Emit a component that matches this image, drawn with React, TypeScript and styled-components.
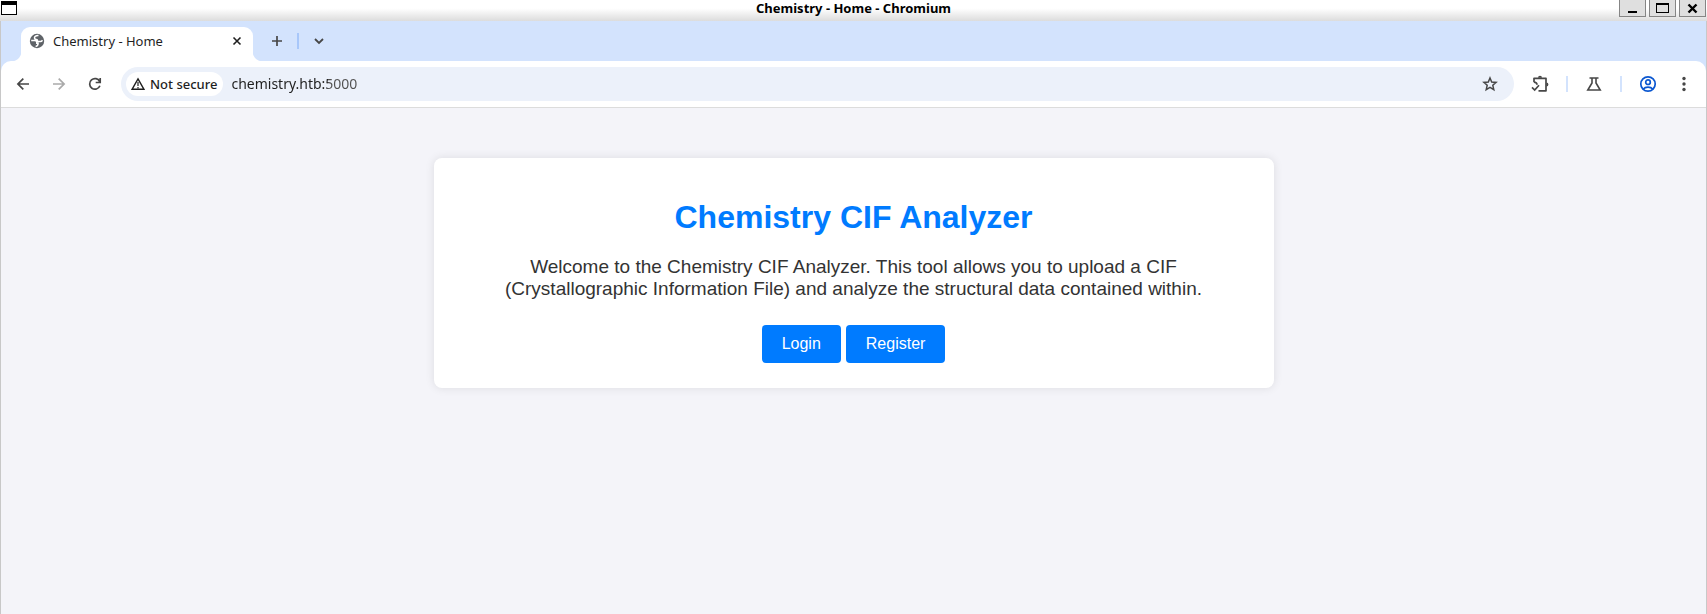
import React from "react";
import styled, { createGlobalStyle } from "styled-components";

const GlobalStyle = createGlobalStyle`
  *, *::before, *::after { box-sizing: border-box; }
  body { margin: 0; background: #f4f4f9; }
  button, input { font: inherit; color: inherit; border: 0; padding: 0; margin: 0; background: none; }
  svg { display: block; flex: none; }
`;

const Window = styled.div`
  display: flex;
  flex-direction: column;
  min-height: 100vh;
  font-family: "Noto Sans", sans-serif;
  font-size: 13px;
  color: #1f1f1f;
`;

const TitleBar = styled.header`
  display: grid;
  grid-template-columns: 1fr auto 1fr;
  height: 21px;
  background: linear-gradient(#ffffff 40%, #dcdcdc);
`;

const MenuButton = styled.button`
  justify-self: start;
  align-self: start;
  margin: 1px;
`;

const WindowTitle = styled.div`
  font-weight: 700;
  line-height: 16px;
  color: #000;
`;

const WindowControls = styled.div`
  display: flex;
  justify-content: flex-end;
  gap: 3px;
  padding-right: 1px;
`;

const WindowControl = styled.button`
  display: flex;
  width: 27px;
  height: 17px;
  border: solid #858585;
  border-width: 0 1px 1px 1px;
  background: #dfdfdf;
`;

const Frame = styled.div`
  display: flex;
  flex-direction: column;
  flex: 1;
  border: solid #c8c8c8;
  border-width: 0 1px;
  background: #d3e3fd;
`;

const TabStrip = styled.div`
  display: flex;
  align-items: flex-end;
  height: 40px;
  padding-left: 20px;
`;

const Tab = styled.div`
  position: relative;
  display: flex;
  align-items: center;
  width: 232px;
  height: 34px;
  padding: 0 8px 6px;
  border-radius: 9px 9px 0 0;
  background: #fff;

  &::before,
  &::after {
    content: "";
    position: absolute;
    bottom: 0;
    width: 10px;
    height: 10px;
  }
  &::before {
    right: 100%;
    background: radial-gradient(circle at 0 0, transparent 10px, #fff 11px);
  }
  &::after {
    left: 100%;
    background: radial-gradient(circle at 100% 0, transparent 10px, #fff 11px);
  }
`;

const TabTitle = styled.span`
  flex: 1;
  margin-left: 8px;
`;

const IconButton = styled.button<{ $width?: number; $color?: string }>`
  display: flex;
  align-items: center;
  justify-content: center;
  flex: none;
  width: ${(p) => p.$width ?? 28}px;
  height: 28px;
  color: ${(p) => p.$color ?? "#474747"};
`;

const TabActions = styled.div`
  display: flex;
  align-items: center;
  gap: 6px;
  height: 40px;
  padding-left: 10px;
`;

const Divider = styled.span<{ $color?: string }>`
  flex: none;
  width: 2px;
  height: 16px;
  background: ${(p) => p.$color ?? "#d3e3fd"};
`;

const Toolbar = styled.div`
  display: flex;
  align-items: center;
  height: 47px;
  padding: 0 12px 0 8px;
  border-bottom: 1px solid #dcdcdc;
  border-radius: 10px 10px 0 0;
  background: #fff;
`;

const Navigation = styled.nav`
  display: flex;
  gap: 8px;
  margin-right: 12px;
`;

const AddressBar = styled.div`
  display: flex;
  align-items: center;
  flex: 1;
  height: 34px;
  padding: 0 10px 0 5px;
  border-radius: 17px;
  background: #ecf1fa;
`;

const SecurityChip = styled.button`
  display: flex;
  align-items: center;
  gap: 5px;
  height: 24px;
  padding: 0 6px 0 5px;
  border-radius: 12px;
  background: #fff;
  font-weight: 500;
  line-height: 24px;
`;

/* The host is darker than the port number that follows it. */
const Address = styled.input`
  flex: 1;
  min-width: 0;
  margin-left: 8px;
  height: 24px;
  padding-bottom: 2px;
  font-size: 14px;
  outline: 0;
  color: transparent;
  caret-color: #1f1f1f;
  background: linear-gradient(90deg, #1f1f1f 97px, #505050 97px);
  background-clip: text;
  -webkit-background-clip: text;
`;

const ToolbarActions = styled.div`
  display: flex;
  align-items: center;
  gap: 12px;
  padding-left: 12px;
`;

const Page = styled.main`
  flex: 1;
  padding: 50px 20px;
  background: #f4f4f9;
  font-family: "Liberation Sans", Arial, sans-serif;
`;

const Card = styled.section`
  max-width: 840px;
  margin: 0 auto;
  padding: 41px 40px 25px;
  border-radius: 8px;
  background: #fff;
  box-shadow: 0 0 10px rgba(0, 0, 0, 0.1);
  text-align: center;
`;

const Heading = styled.h1`
  margin: 0 0 20px;
  font-size: 32px;
  line-height: 37px;
  color: #007bff;
`;

const Intro = styled.p`
  margin: 0 0 25px;
  font-size: 19px;
  line-height: 22px;
  color: #333;
`;

const CardActions = styled.div`
  display: flex;
  justify-content: center;
  gap: 5px;
`;

const ActionLink = styled.a`
  padding: 10px 20px;
  border-radius: 4px;
  background: #007bff;
  color: #fff;
  font-size: 16px;
  line-height: 18px;
  text-decoration: none;
`;

const Icon = ({ size = 16, width = 2, children }: { size?: number; width?: number; children: React.ReactNode }) => (
  <svg width={size} height={size} viewBox={`0 0 ${size} ${size}`} fill="none" stroke="currentColor" strokeWidth={width} aria-hidden="true">
    {children}
  </svg>
);

export default function App() {
  return (
    <>
      <GlobalStyle />
      <Window>
        <TitleBar>
          <MenuButton aria-label="Window menu">
            <svg width="16" height="14" shapeRendering="crispEdges">
              <path d="M0 0h16v14H0z" fill="#000" />
              <path d="M1 4h14v9H1z" fill="#fff" />
            </svg>
          </MenuButton>
          <WindowTitle>Chemistry - Home - Chromium</WindowTitle>
          <WindowControls>
            <WindowControl aria-label="Minimize">
              <svg width="25" height="16" shapeRendering="crispEdges"><path d="M8 11h9v2H8z" /></svg>
            </WindowControl>
            <WindowControl aria-label="Maximize">
              <svg width="25" height="16" shapeRendering="crispEdges">
                <path fillRule="evenodd" d="M6 3h13v10H6zM7 5v7h11V5z" />
              </svg>
            </WindowControl>
            <WindowControl aria-label="Close">
              <svg width="25" height="16"><path d="M8.5 4.500l8 8M16.500 4.500l-8 8" stroke="#000" strokeWidth="2.400" /></svg>
            </WindowControl>
          </WindowControls>
        </TitleBar>
        <Frame>
          <TabStrip>
            <Tab>
              <svg width="16" height="16" viewBox="0 0 16 16" aria-hidden="true">
                <circle cx="8" cy="8" r="7.200" fill="#5f6368" />
                <path
                  d="M9.500 2.600c-2.600-.2-4 .9-4 2.200 0 1.300.8 1.700 2 1.700.9 0 1 .5 1 1.200 0 .6.400.9 1.300.9h1.700c1 0 1.500-.6 2-1.300M2.200 7.600h3.400c1.500 0 2.200.7 2.200 1.700v.9h1.300c0 1.700-.8 3-2.500 3.200"
                  fill="none"
                  stroke="#fff"
                  strokeWidth="1.500"
                />
              </svg>
              <TabTitle>Chemistry - Home</TabTitle>
              <IconButton $width={16} $color="#1f1f1f" aria-label="Close tab">
                <Icon><path d="M4.500 4.500l7 7M11.500 4.500l-7 7" strokeWidth="1.600" /></Icon>
              </IconButton>
            </Tab>
            <TabActions>
              <IconButton aria-label="New tab">
                <Icon><path d="M8 3v10M3 8h10" strokeWidth="1.700" /></Icon>
              </IconButton>
              <Divider $color="#a8c7fa" />
              <IconButton aria-label="Search tabs">
                <Icon><path d="M4 6l4 4 4-4" strokeWidth="1.800" /></Icon>
              </IconButton>
            </TabActions>
          </TabStrip>
          <Toolbar>
            <Navigation aria-label="History">
              <IconButton aria-label="Back">
                <Icon><path d="M14 8H3M8.300 2.600L2.900 8l5.400 5.400" strokeWidth="1.700" /></Icon>
              </IconButton>
              <IconButton $color="#aaaaaa" aria-label="Forward">
                <Icon><path d="M2 8h11M7.700 2.600L13.100 8l-5.400 5.400" strokeWidth="1.700" /></Icon>
              </IconButton>
              <IconButton aria-label="Reload">
                <Icon><path d="M12.900 9.800A5.300 5.300 0 1 1 12.700 5.500M13.200 2v4.500H8.700" strokeWidth="1.700" /></Icon>
              </IconButton>
            </Navigation>
            <AddressBar>
              <SecurityChip>
                <Icon size={14}>
                  <path d="M7 1.800L13 12.300H1z" strokeWidth="1.400" />
                  <path d="M7 5v4M7 10v1.400" strokeWidth="1.200" />
                </Icon>
                Not secure
              </SecurityChip>
              <Address aria-label="Address" defaultValue="chemistry.htb:5000" />
              <IconButton aria-label="Bookmark this page">
                <Icon><path d="M8 2l1.700 4 4.400.4-3.300 2.900 1 4.300L8 11.300l-3.800 2.300 1-4.300L1.900 6.400 6.300 6z" strokeWidth="1.500" /></Icon>
              </IconButton>
            </AddressBar>
            <ToolbarActions>
              <IconButton aria-label="Extensions">
                <Icon size={20}>
                  <path d="M4 8.200V4.300h12v12.500H8.500M4 8.200c2 0 3 1 3 2.600" strokeWidth="1.700" strokeLinejoin="round" />
                  <path d="M2 13.300l2.700 2.700 4.300-4.800" strokeWidth="1.700" />
                  <path d="M8 3.800a2 2 0 0 1 4 0zM16.400 8.500a2 2 0 0 1 0 4z" fill="currentColor" stroke="none" />
                </Icon>
              </IconButton>
              <Divider />
              <IconButton aria-label="Labs">
                <Icon><path d="M3.500 2h9M6 2v5L1.800 14h12.400L10 7V2" strokeWidth="1.600" /></Icon>
              </IconButton>
              <Divider />
              <IconButton $color="#0b57d0" aria-label="Profile">
                <Icon size={18}>
                  <circle cx="9" cy="9" r="7.200" strokeWidth="1.700" />
                  <circle cx="9" cy="7.200" r="2.300" strokeWidth="1.700" />
                  <path d="M4 14.200c2.600-2.900 7.400-2.900 10 0" strokeWidth="1.700" />
                </Icon>
              </IconButton>
              <IconButton $width={20} aria-label="Menu">
                <svg width="16" height="16" fill="currentColor">
                  <circle cx="8" cy="2.500" r="1.700" />
                  <circle cx="8" cy="8" r="1.700" />
                  <circle cx="8" cy="13.500" r="1.700" />
                </svg>
              </IconButton>
            </ToolbarActions>
          </Toolbar>
          <Page>
            <Card>
              <Heading>Chemistry CIF Analyzer</Heading>
              <Intro>
                Welcome to the Chemistry CIF Analyzer. This tool allows you to upload a CIF (Crystallographic Information
                File) and analyze the structural data contained within.
              </Intro>
              <CardActions>
                <ActionLink href="#login">Login</ActionLink>
                <ActionLink href="#register">Register</ActionLink>
              </CardActions>
            </Card>
          </Page>
        </Frame>
      </Window>
    </>
  );
}
